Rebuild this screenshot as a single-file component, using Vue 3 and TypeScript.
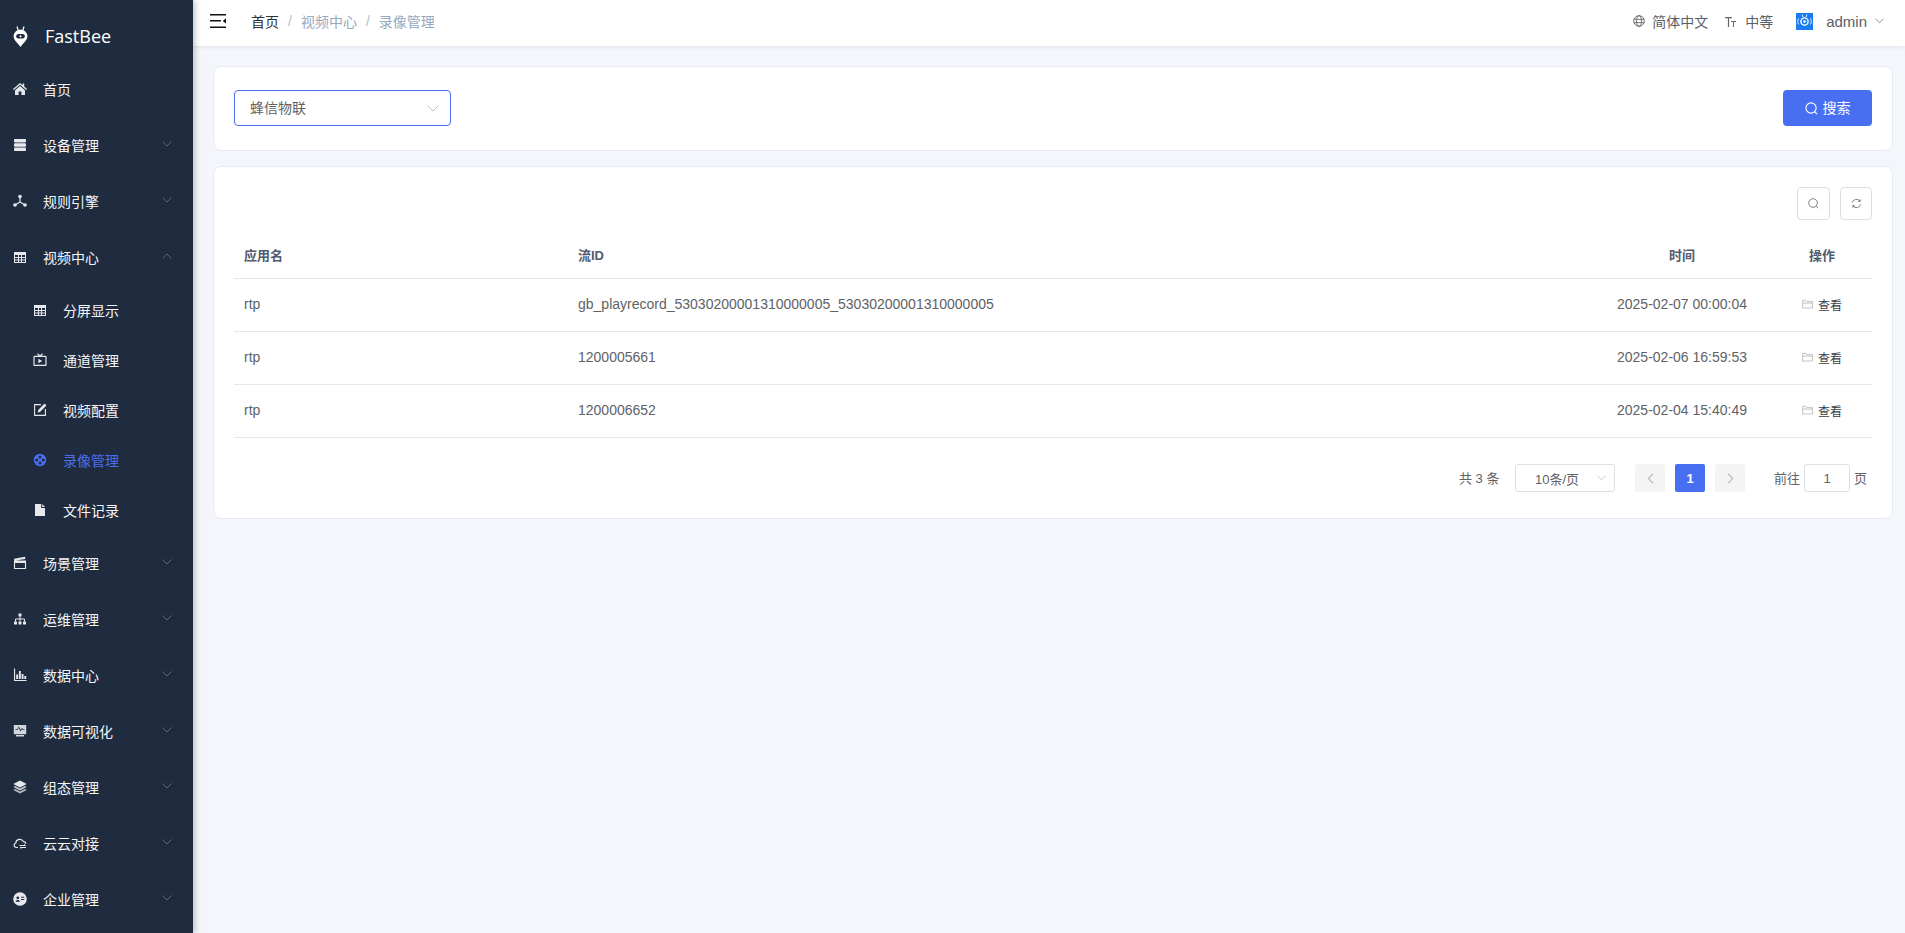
<script setup lang="ts">
interface MenuItem { label: string; icon: string; sub?: boolean; active?: boolean; arrow?: 'down' | 'up' }

const icons: Record<string, string> = {
  home: '<path fill="currentColor" d="M7 1 0 7l.8 1L7 2.700 13.200 8l.8-1-2.800-2.400V1.500H9.600v1.700z"/><path fill="currentColor" d="M7 4 2 8.300V13h3.600V9.400h2.800V13H12V8.300z"/>',
  server: '<rect fill="currentColor" x="1" y="1" width="12" height="3.400" rx=".8"/><rect fill="currentColor" x="1" y="5.300" width="12" height="3.400" rx=".8"/><rect fill="currentColor" x="1" y="9.600" width="12" height="3.400" rx=".8"/>',
  nodes: '<g fill="currentColor"><circle cx="7" cy="2.600" r="1.800"/><circle cx="2" cy="11" r="1.800"/><circle cx="12" cy="11" r="1.800"/></g><path fill="none" stroke="currentColor" stroke-width="1.200" d="M7 3v5M7 8l-5 3M7 8l5 3"/>',
  grid: '<path fill="currentColor" fill-rule="evenodd" d="M1 2h12v11H1zm1 3v2h3V5zm4 0v2h2V5zm3 0v2h3V5zM2 8v1.600h3V8zm4 0v1.600h2V8zm3 0v1.600h3V8zm-7 2.500V12h3v-1.500zm4 0V12h2v-1.500zm3 0V12h3v-1.500z"/>',
  tv: '<path fill="none" stroke="currentColor" stroke-width="1.200" d="M4.500.8 7 3.200 9.500.8M1.600 3.400h10.800a.6.6 0 0 1 .6.6v7.800a.6.6 0 0 1-.6.6H1.600a.6.6 0 0 1-.6-.6V4a.6.6 0 0 1 .6-.6z"/><path fill="currentColor" d="M5.400 5.800 9.200 8 5.400 10.200z"/>',
  edit: '<path fill="none" stroke="currentColor" stroke-width="1.100" d="M8 1.600H1.600v10.800h10.800V6"/><path fill="currentColor" d="M11.500.6 13.400 2.500 7 9 4.800 9.400 5.200 7.100z"/>',
  reel: '<path fill="currentColor" fill-rule="evenodd" d="M7 .8a6.200 6.200 0 1 0 0 12.400A6.200 6.200 0 0 0 7 .8zM7 2.600a1.500 1.500 0 1 1 0 3 1.500 1.500 0 0 1 0-3zM3.700 5.500a1.500 1.500 0 1 1 0 3 1.500 1.500 0 0 1 0-3zm6.600 0a1.500 1.500 0 1 1 0 3 1.500 1.500 0 0 1 0-3zM7 8.400a1.500 1.500 0 1 1 0 3 1.500 1.500 0 0 1 0-3z"/>',
  file: '<path fill="currentColor" d="M2 1h6.200v4H12v8H2zM9.200 1 12 4H9.200z"/>',
  clapper: '<path fill="none" stroke="currentColor" stroke-width="1.100" d="M1.500 5.500h11v7h-11z"/><path fill="currentColor" d="M1 4.500h12v2.400H1zM1 2.700 12 .8l.4 2.200L1.400 4.700z"/>',
  sitemap: '<path fill="currentColor" d="M5.500 1.500h3v3h-3zM1 9.500h3v3H1zM5.500 9.500h3v3h-3zM10 9.500h3v3h-3z"/><path fill="none" stroke="currentColor" d="M7 4.500V9.500M2.500 9.500V7h9v2.500"/>',
  bars: '<path fill="currentColor" d="M1 .5h1.100V12H13.500v1.100H1zM3.200 6.500h1.900V11H3.200zM5.900 3h1.900v8H5.900zM8.600 6h1.900v5H8.600zM11.300 8h1.900v3h-1.900z"/>',
  monitor: '<path fill="currentColor" fill-rule="evenodd" d="M.8 1h12.400v9.200H.8zM2.600 5.800h2.200l1-2 1.600 3.600L9 5.100l.6.700h1.800V5H9.900L9 3.800 7.600 5.800 5.800 2.400 4.400 5H2.600zM3 11h8v1.500H3z" opacity=".9"/>',
  layers: '<path fill="currentColor" d="M7 .5 13.700 4 7 7.500.3 4z"/><path fill="currentColor" d="M2.200 6 7 8.500 11.800 6l1.900 1L7 10.500.3 7z" opacity=".85"/><path fill="currentColor" d="M2.200 9 7 11.500 11.800 9l1.900 1L7 13.500.3 10z" opacity=".75"/>',
  cloud: '<path fill="none" stroke="currentColor" stroke-width="1.200" d="M5 11.500H3.200A2.300 2.300 0 0 1 2.800 7a4 4 0 0 1 7.600-1.400A2.600 2.600 0 0 1 13 7.600"/><path fill="none" stroke="currentColor" d="M6.500 9.500h6l-1.300-1.200M13 11.500H7l1.300 1.200"/>',
  contact: '<path fill="currentColor" fill-rule="evenodd" d="M7 .2a6.800 6.800 0 1 0 0 13.600A6.800 6.800 0 0 0 7 .2zM4.800 4.400a1.400 1.400 0 1 1 0 2.800 1.400 1.400 0 0 1 0-2.800zM8 4.800h3.200v1H8zM8 7h3.200v1H8zM2.600 9.800c0-1.200 1.100-1.800 2.200-1.800s2.200.6 2.200 1.800z"/>'
}

const menu: MenuItem[] = [
  { label: '首页', icon: 'home' },
  { label: '设备管理', icon: 'server', arrow: 'down' },
  { label: '规则引擎', icon: 'nodes', arrow: 'down' },
  { label: '视频中心', icon: 'grid', arrow: 'up' },
  { label: '分屏显示', icon: 'grid', sub: true },
  { label: '通道管理', icon: 'tv', sub: true },
  { label: '视频配置', icon: 'edit', sub: true },
  { label: '录像管理', icon: 'reel', sub: true, active: true },
  { label: '文件记录', icon: 'file', sub: true },
  { label: '场景管理', icon: 'clapper', arrow: 'down' },
  { label: '运维管理', icon: 'sitemap', arrow: 'down' },
  { label: '数据中心', icon: 'bars', arrow: 'down' },
  { label: '数据可视化', icon: 'monitor', arrow: 'down' },
  { label: '组态管理', icon: 'layers', arrow: 'down' },
  { label: '云云对接', icon: 'cloud', arrow: 'down' },
  { label: '企业管理', icon: 'contact', arrow: 'down' }
]

const rows = [
  { app: 'rtp', id: 'gb_playrecord_53030200001310000005_53030200001310000005', time: '2025-02-07 00:00:04' },
  { app: 'rtp', id: '1200005661', time: '2025-02-06 16:59:53' },
  { app: 'rtp', id: '1200006652', time: '2025-02-04 15:40:49' }
]
</script>

<template>
  <div class="layout">
    <aside class="sidebar">
      <div class="logo">
        <svg class="logo-mark" viewBox="0 0 15 21" width="15" height="21">
          <path fill="none" stroke="#fff" stroke-width="1.200" d="M4 .5 5 4M11 .5 10 4" />
          <path fill="#fff" d="M7.500 3.400A6.900 6.900 0 0 0 .6 10.300c0 4.100 3.900 6.300 6.900 10.700 3-4.400 6.900-6.600 6.900-10.700a6.900 6.900 0 0 0-6.900-6.900z" />
          <rect x="3.200" y="8" width="8.600" height="4.600" rx="2.300" fill="#1f2c3f" />
          <circle cx="7.500" cy="10.300" r="1.100" fill="#fff" />
        </svg>
        <span class="logo-text">FastBee</span>
      </div>
      <div
        v-for="item in menu"
        :key="item.label"
        class="menu-item"
        :class="{ sub: item.sub, active: item.active }"
      >
        <svg class="menu-icon" viewBox="0 0 14 14" width="14" height="14" v-html="icons[item.icon]"></svg>
        <span class="menu-label">{{ item.label }}</span>
        <svg v-if="item.arrow" class="menu-arrow" viewBox="0 0 10 6" width="10" height="6">
          <path fill="none" stroke="currentColor" :d="item.arrow === 'down' ? 'M.5.500 5 5 9.500.500' : 'M.5 5.500 5 1 9.500 5.500'" />
        </svg>
      </div>
    </aside>

    <div class="main">
      <header class="navbar">
        <svg class="hamburger" viewBox="0 0 16 14" width="16" height="14">
          <path fill="#111" d="M0 0h16v1.600H0zM0 6h11v1.600H0zM0 12.400h16V14H0z" />
          <path fill="#111" d="M16 4.200v5.400L12.800 7z" />
        </svg>
        <nav class="crumbs">
          <span class="crumb-home">首页</span>
          <span class="crumb-sep">/</span>
          <span class="crumb">视频中心</span>
          <span class="crumb-sep">/</span>
          <span class="crumb">录像管理</span>
        </nav>
        <div class="nav-right">
          <span class="nav-tool">
            <svg viewBox="0 0 12 12" width="12" height="12">
              <g fill="none" stroke="#666" stroke-width=".9">
                <circle cx="6" cy="6" r="5.300" /><ellipse cx="6" cy="6" rx="2.400" ry="5.300" /><path d="M.7 4.300h10.600M.7 7.700h10.600" />
              </g>
            </svg>
            简体中文
          </span>
          <span class="nav-tool size-tool">
            <svg viewBox="0 0 11 11" width="11" height="11">
              <path fill="#666" d="M0 1h7v1.200H4.100V11H2.900V2.200H0zM6 5h5v1H9v5H8V6H6z" />
            </svg>
            中等
          </span>
          <span class="avatar">
            <svg viewBox="0 0 17 17" width="17" height="17">
              <rect width="17" height="17" fill="#1a7cf2" />
              <circle cx="8.500" cy="8.500" r="3.600" fill="none" stroke="#fff" stroke-width="1.400" />
              <circle cx="8.500" cy="8.500" r="1.300" fill="#fff" />
              <path fill="none" stroke="#dbeafe" d="M2.500 5.500c-1 2-1 4 0 6M14.500 5.500c1 2 1 4 0 6M6 1.500l1 2.500M11 1.500 10 4" />
            </svg>
          </span>
          <span class="admin">admin</span>
          <svg viewBox="0 0 10 6" width="9" height="6"><path fill="none" stroke="#888" d="M.5.500 5 5 9.500.500" /></svg>
        </div>
      </header>

      <section class="content">
        <div class="card search-card">
          <div class="select">
            <span>蜂信物联</span>
            <svg viewBox="0 0 12 7" width="12" height="7"><path fill="none" stroke="#c0c4cc" d="M.5.500 6 6l5.500-5.500" /></svg>
          </div>
          <button class="search-btn">
            <svg viewBox="0 0 14 14" width="13" height="13">
              <circle cx="6.500" cy="6.500" r="5.500" fill="none" stroke="#fff" stroke-width="1.200" /><path stroke="#fff" stroke-width="1.200" d="m10.500 10.500 2.500 2.500" />
            </svg>
            <span>搜索</span>
          </button>
        </div>

        <div class="card table-card">
          <div class="toolbar">
            <span class="tool-btn">
              <svg viewBox="0 0 12 12" width="11" height="11">
                <circle cx="5.500" cy="5.500" r="4.700" fill="none" stroke="#777" /><path stroke="#777" d="m9 9 2.200 2.200" />
              </svg>
            </span>
            <span class="tool-btn">
              <svg viewBox="0 0 12 12" width="11" height="11">
                <path fill="none" stroke="#777" d="M1.500 5a4.600 4.600 0 0 1 8.200-1.700M10.500 7a4.600 4.600 0 0 1-8.200 1.700" />
                <path fill="#777" d="M10.500 1v3.200H7.300zM1.500 11V7.800h3.200z" />
              </svg>
            </span>
          </div>
          <div class="table">
            <div class="tr th">
              <div class="td c-app">应用名</div>
              <div class="td c-id">流ID</div>
              <div class="td c-time">时间</div>
              <div class="td c-op">操作</div>
            </div>
            <div v-for="row in rows" :key="row.id" class="tr">
              <div class="td c-app">{{ row.app }}</div>
              <div class="td c-id">{{ row.id }}</div>
              <div class="td c-time">{{ row.time }}</div>
              <div class="td c-op">
                <span class="view">
                  <svg viewBox="0 0 12 10" width="11" height="10">
                    <path fill="none" stroke="#bbb" d="M.7 1h3.600l1 1.400h6v7H.7zM.7 4h10.600" />
                  </svg>
                  查看
                </span>
              </div>
            </div>
          </div>
          <div class="pager">
            <span class="total">共 3 条</span>
            <div class="size-select">
              <span>10条/页</span>
              <svg viewBox="0 0 10 6" width="9" height="6"><path fill="none" stroke="#c0c4cc" d="M.5.500 5 5 9.500.500" /></svg>
            </div>
            <span class="page-btn">
              <svg viewBox="0 0 7 11" width="7" height="11"><path fill="none" stroke="#c0c4cc" stroke-width="1.500" d="M6 .8 1.400 5.500 6 10.200" /></svg>
            </span>
            <span class="page-btn current">1</span>
            <span class="page-btn">
              <svg viewBox="0 0 7 11" width="7" height="11"><path fill="none" stroke="#c0c4cc" stroke-width="1.500" d="M1 .8l4.600 4.700L1 10.200" /></svg>
            </span>
            <span class="jump">前往</span>
            <span class="page-input">1</span>
            <span class="jump-end">页</span>
          </div>
        </div>
      </section>
    </div>
  </div>
</template>

<style>
html, body { margin: 0; background: #f4f6fb; }
</style>

<style scoped>
.layout {
  display: flex;
  height: 933px;
  overflow: hidden;
  font-family: "Liberation Sans", "Noto Sans CJK SC", sans-serif;
  font-size: 14px;
  color: #606266;
  background: #f4f6fb;
}
.sidebar {
  flex: 0 0 193px;
  height: 933px;
  background: #1f2c3f;
  box-shadow: 2px 0 6px rgba(0, 21, 41, .25);
  position: relative;
  z-index: 2;
  color: #fff;
  overflow: hidden;
}
.logo {
  height: 62px;
  display: flex;
  align-items: center;
  padding-left: 13px;
  padding-top: 10px;
  box-sizing: border-box;
}
.logo-mark { flex: none; }
.logo-text {
  margin-left: 17px;
  font-size: 18px;
  font-family: "Open Sans", "Liberation Sans", sans-serif;
  color: #fff;
}
.menu-item {
  height: 56px;
  display: flex;
  align-items: center;
  padding-left: 13px;
  position: relative;
}
.menu-item.sub {
  height: 50px;
  padding-left: 33px;
}
.menu-icon { flex: none; margin-top: -2px; color: #e6e8ec; }
.menu-label { margin-left: 16px; margin-top: -2px; color: #f4f6f9; }
.menu-item.active .menu-icon,
.menu-item.active .menu-label { color: #4a6ff0; }
.menu-arrow {
  position: absolute;
  right: 21px;
  top: 23px;
  color: #5c6675;
}
.main {
  flex: 1;
  min-width: 0;
  display: flex;
  flex-direction: column;
}
.navbar {
  height: 46px;
  flex: none;
  background: #fff;
  box-shadow: 0 1px 4px rgba(0, 21, 41, .08);
  display: flex;
  align-items: center;
  padding-left: 17px;
  padding-right: 21px;
  position: relative;
  z-index: 1;
}
.hamburger { flex: none; margin-top: -4px; }
.crumbs {
  margin-left: 25px;
  display: flex;
  align-items: center;
  margin-top: -4px;
  color: #97a8be;
}
.crumb-home { color: #303133; }
.crumb-sep { margin: 0 9px; color: #b4bccc; }
.nav-right {
  margin-left: auto;
  display: flex;
  align-items: center;
  margin-top: -4px;
}
.nav-tool {
  display: inline-flex;
  align-items: center;
  gap: 7px;
  color: #5a5e66;
}
.size-tool { margin-left: 17px; gap: 9px; }
.avatar { margin-left: 23px; height: 17px; display: block; line-height: 0; }
.admin { margin: 0 8px 0 13px; color: #5a5e66; font-size: 15px; }
.content {
  padding: 20px 12px 0 20px;
  display: flex;
  flex-direction: column;
  gap: 15px;
}
.card {
  background: #fff;
  border: 1px solid #e6ebf5;
  border-radius: 8px;
  box-sizing: border-box;
}
.search-card {
  height: 85px;
  display: flex;
  align-items: flex-start;
  justify-content: space-between;
  padding: 23px 20px 0;
}
.select {
  width: 217px;
  height: 36px;
  box-sizing: border-box;
  border: 1px solid #486ff2;
  border-radius: 4px;
  display: flex;
  align-items: center;
  justify-content: space-between;
  padding: 0 11px 0 15px;
  color: #606266;
}
.select span { margin-top: -2px; }
.search-btn {
  width: 89px;
  height: 36px;
  border: 0;
  border-radius: 4px;
  background: #486ff2;
  color: #fff;
  font: inherit;
  display: flex;
  align-items: center;
  justify-content: center;
  gap: 5px;
  padding: 0;
}
.search-btn span { margin-top: -2px; }
.table-card {
  height: 353px;
  padding: 20px 20px 0;
}
.toolbar {
  display: flex;
  justify-content: flex-end;
  gap: 10px;
}
.tool-btn {
  width: 33px;
  height: 33px;
  box-sizing: border-box;
  border: 1px solid #dcdfe6;
  border-radius: 4px;
  display: flex;
  align-items: center;
  justify-content: center;
}
.tool-btn:last-child { width: 32px; }
.table { margin-top: 12px; }
.tr {
  display: flex;
  height: 53px;
  align-items: center;
  box-sizing: border-box;
  border-bottom: 1px solid #e4e8ef;
}
.tr.th {
  height: 47px;
  font-size: 13px;
  font-weight: 700;
  color: #515a6e;
  border-bottom-color: #dfe6ec;
}
.td { box-sizing: border-box; padding: 0 10px; margin-top: -2px; }
.c-app { flex: 0 0 334px; }
.c-id { flex: 1; min-width: 0; }
.c-time { flex: 0 0 180px; text-align: center; }
.c-op { flex: 0 0 100px; text-align: center; padding: 0; }
.view {
  display: inline-flex;
  align-items: center;
  gap: 5px;
  font-size: 12px;
  color: #3a3f4a;
}
.pager {
  margin-top: 26px;
  height: 28px;
  display: flex;
  align-items: center;
  font-size: 13px;
  padding-left: 1225px;
}
.total { width: 56px; margin-top: -2px; }
.size-select {
  width: 100px;
  height: 28px;
  box-sizing: border-box;
  border: 1px solid #dcdfe6;
  border-radius: 3px;
  display: flex;
  align-items: center;
  justify-content: space-between;
  padding: 0 8px 0 19px;
}
.page-btn {
  width: 30px;
  height: 28px;
  margin-left: 10px;
  background: #f4f4f5;
  border-radius: 2px;
  display: flex;
  align-items: center;
  justify-content: center;
}
.size-select + .page-btn { margin-left: 20px; }
.page-btn.current {
  background: #486ff2;
  color: #fff;
  font-weight: 700;
}
.jump { margin-left: 29px; margin-top: -2px; }
.page-input {
  width: 46px;
  height: 28px;
  margin-left: 4px;
  box-sizing: border-box;
  border: 1px solid #dcdfe6;
  border-radius: 3px;
  display: flex;
  align-items: center;
  justify-content: center;
}
.jump-end { margin-left: 4px; margin-top: -2px; }
</style>
